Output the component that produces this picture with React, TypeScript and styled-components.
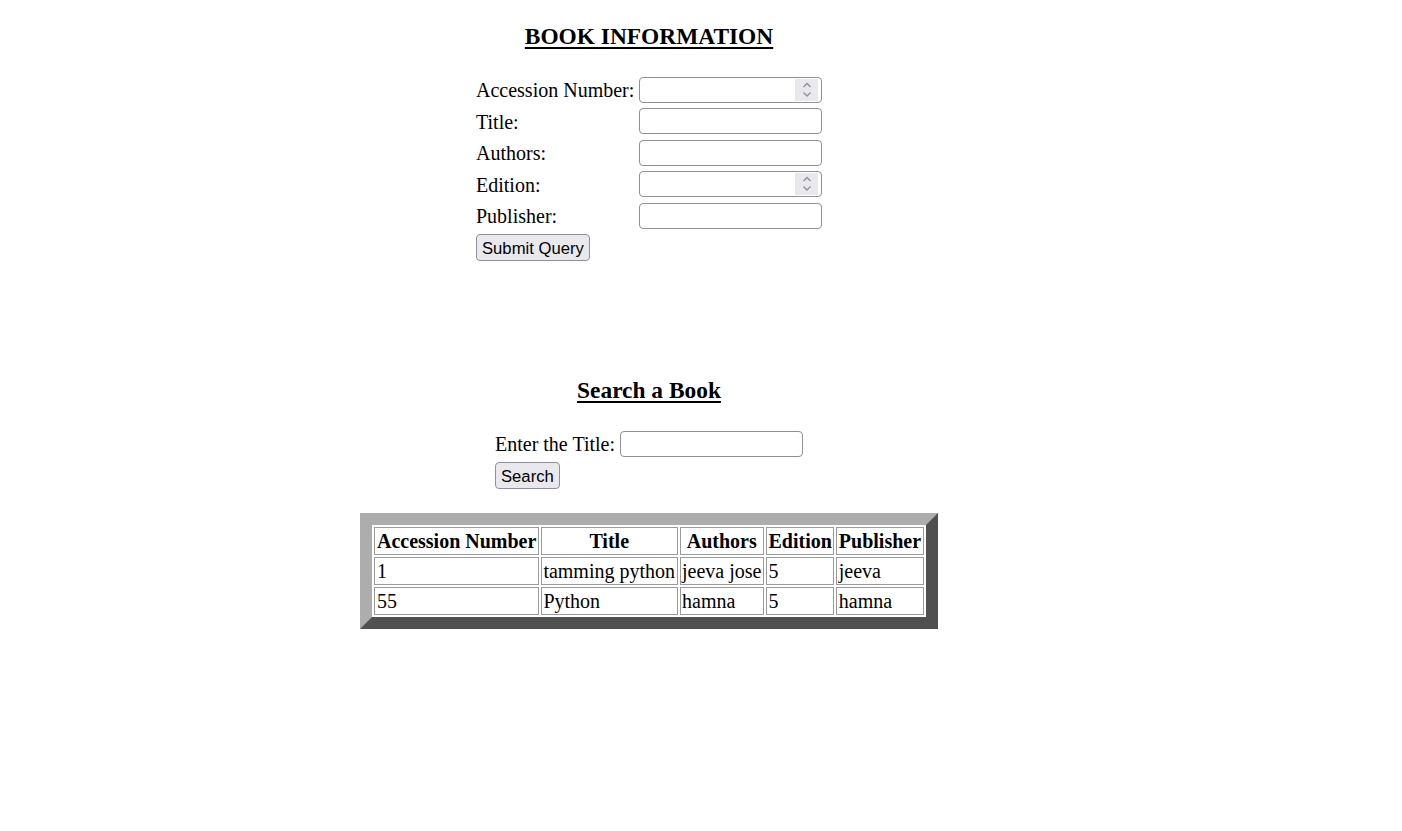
import React from "react";
import styled, { createGlobalStyle } from "styled-components";

const GlobalStyle = createGlobalStyle`
  html, body {
    margin: 0;
    padding: 0;
    background: #ffffff;
  }
  body {
    font-family: "Liberation Serif", "Times New Roman", serif;
    font-size: 20px;
    color: #000000;
  }
`;

const Page = styled.div`
  width: 1298px;
  display: flex;
  flex-direction: column;
  align-items: center;
  padding-top: 23px;
`;

const Heading = styled.h3<{ $top?: number }>`
  margin: ${(p) => p.$top ?? 0}px 0 0;
  font-size: 23.4px;
  line-height: 27px;
  font-weight: bold;
  text-decoration: underline;
  text-decoration-thickness: 2px;
  text-underline-offset: 3px;
`;

const FormGrid = styled.form`
  margin-top: 26.6px;
  display: grid;
  grid-template-columns: 158px 183px;
  grid-auto-rows: 26.5px;
  column-gap: 5px;
  row-gap: 5px;
  align-items: center;
`;

const Label = styled.label`
  line-height: 23px;
  padding-top: 1.5px;
  white-space: nowrap;
`;

const TextField = styled.input`
  box-sizing: border-box;
  width: 183px;
  height: 26.25px;
  margin: 0;
  border: 1px solid #8f8f9d;
  border-radius: 4px;
  background: #ffffff;
  padding: 1px 3px;
  font-family: "Liberation Sans", Arial, sans-serif;
  font-size: 16.67px;
  outline: none;
`;

const NumberBox = styled.div`
  box-sizing: border-box;
  width: 183px;
  height: 26.25px;
  border: 1px solid #8f8f9d;
  border-radius: 4px;
  background: #ffffff;
  display: flex;
  align-items: center;
`;

const BareInput = styled.input`
  flex: 1;
  min-width: 0;
  height: 100%;
  border: none;
  background: transparent;
  padding: 1px 3px;
  margin: 0;
  font-family: "Liberation Sans", Arial, sans-serif;
  font-size: 16.67px;
  outline: none;
`;

const Spinner = styled.div`
  width: 23px;
  height: 22px;
  margin-right: 3px;
  background: #e9e9ed;
  display: flex;
  flex-shrink: 0;
`;

const Button = styled.button`
  justify-self: start;
  align-self: start;
  box-sizing: border-box;
  height: 27px;
  margin: 0;
  padding: 3px 5px 1px;
  background: #e9e9ed;
  border: 1px solid #8f8f9d;
  border-radius: 4px;
  font-family: "Liberation Sans", Arial, sans-serif;
  font-size: 16.67px;
  line-height: 19px;
  color: #000000;
  white-space: nowrap;
`;

const SearchForm = styled.form`
  margin-top: 27px;
  display: flex;
  flex-direction: column;
  align-items: flex-start;
  gap: 4.75px;
`;

const SearchRow = styled.div`
  display: flex;
  align-items: center;
  gap: 5px;
`;

const SearchLabel = styled.label`
  line-height: 23px;
  padding-top: 1.5px;
  white-space: nowrap;
`;

const ResultTable = styled.table`
  margin-top: 23.75px;
  border-style: solid;
  border-width: 12px;
  border-color: #adadad #505050 #505050 #adadad;
  border-spacing: 2.5px;
  font-size: 20px;
  line-height: 23px;
`;

const HeadCell = styled.th`
  border: 1px solid #9a9a9a;
  padding: 2px 1.5px 1px;
  font-weight: bold;
  text-align: center;
  white-space: nowrap;
`;

const Cell = styled.td`
  border: 1px solid #9a9a9a;
  padding: 2px 1.5px 1px;
  text-align: left;
  white-space: nowrap;
`;

const SpinIcon = () => (
  <svg width="23" height="22" viewBox="0 0 23 22" aria-hidden="true">
    <path d="M8.5 8 L12 4.5 L15.5 8" fill="none" stroke="#8f8f9d" strokeWidth="1.3" />
    <path d="M8.5 13.5 L12 17 L15.5 13.5" fill="none" stroke="#8f8f9d" strokeWidth="1.3" />
  </svg>
);

const NumberField = () => (
  <NumberBox>
    <BareInput type="text" />
    <Spinner>
      <SpinIcon />
    </Spinner>
  </NumberBox>
);

const rows = [
  { acc: "1", title: "tamming python", authors: "jeeva jose", edition: "5", publisher: "jeeva" },
  { acc: "55", title: "Python", authors: "hamna", edition: "5", publisher: "hamna" },
];

export default function App() {
  return (
    <>
      <GlobalStyle />
      <Page>
        <Heading>BOOK INFORMATION</Heading>
        <FormGrid onSubmit={(e) => e.preventDefault()}>
          <Label>Accession Number:</Label>
          <NumberField />
          <Label>Title:</Label>
          <TextField type="text" />
          <Label>Authors:</Label>
          <TextField type="text" />
          <Label>Edition:</Label>
          <NumberField />
          <Label>Publisher:</Label>
          <TextField type="text" />
          <Button type="submit">Submit Query</Button>
        </FormGrid>

        <Heading $top={116.35}>Search a Book</Heading>
        <SearchForm onSubmit={(e) => e.preventDefault()}>
          <SearchRow>
            <SearchLabel>Enter the Title:</SearchLabel>
            <TextField type="text" />
          </SearchRow>
          <Button type="submit">Search</Button>
        </SearchForm>

        <ResultTable>
          <thead>
            <tr>
              <HeadCell>Accession Number</HeadCell>
              <HeadCell>Title</HeadCell>
              <HeadCell>Authors</HeadCell>
              <HeadCell>Edition</HeadCell>
              <HeadCell>Publisher</HeadCell>
            </tr>
          </thead>
          <tbody>
            {rows.map((r) => (
              <tr key={r.acc}>
                <Cell>{r.acc}</Cell>
                <Cell>{r.title}</Cell>
                <Cell>{r.authors}</Cell>
                <Cell>{r.edition}</Cell>
                <Cell>{r.publisher}</Cell>
              </tr>
            ))}
          </tbody>
        </ResultTable>
      </Page>
    </>
  );
}
